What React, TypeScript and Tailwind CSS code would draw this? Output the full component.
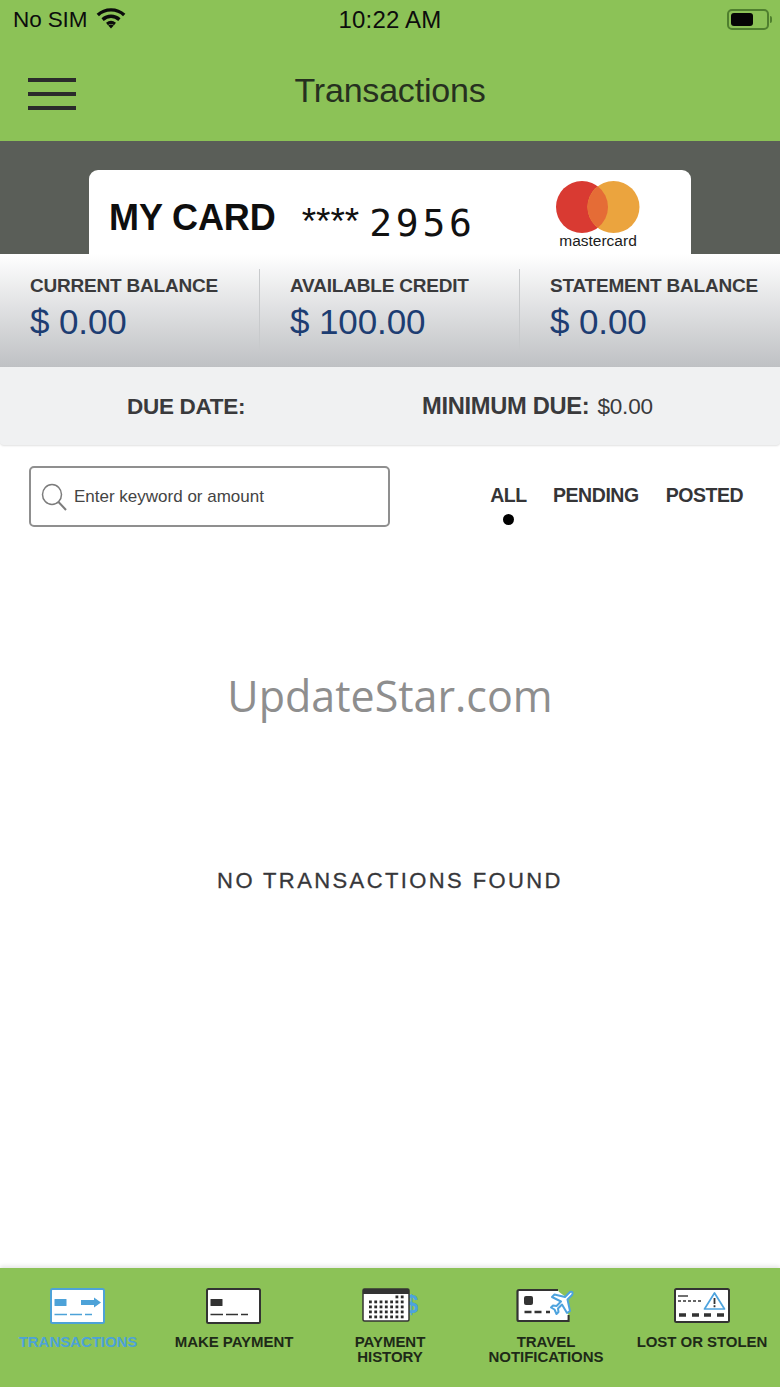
import React from "react";

const sans = "font-['Liberation_Sans',Arial,sans-serif]";

function Wifi() {
  return (
    <svg width="30" height="22" viewBox="0 0 30 22" fill="none" stroke="#0b0b0b" strokeWidth="3.400">
      <path d="M1.800 8 C9 1.200 21 1.200 28.200 8" />
      <path d="M6.600 12.600 C11.600 8.200 18.400 8.200 23.400 12.600" />
      <path d="M11 17 C13.400 15 16.600 15 19 17" strokeWidth="3" />
      <path d="M12.200 18.600 L15 21.600 L17.800 18.600 C16 17.200 14 17.200 12.200 18.600Z" fill="#0b0b0b" stroke="none" />
    </svg>
  );
}

function Battery() {
  return (
    <div className="flex items-center gap-[1px]">
      <div className="w-[42px] h-[21px] rounded-[5px] border-2 border-[#4f7f2e] p-[2px]">
        <div className="w-[22px] h-full rounded-[3px] bg-[#050505]" />
      </div>
      <div className="w-[2px] h-[7px] rounded-r-sm bg-[#4f7f2e]" />
    </div>
  );
}

function MasterLogo() {
  return (
    <div className="flex flex-col items-center w-[84px] shrink-0 mt-[1px]">
      <svg width="84" height="52" viewBox="0 0 84 52" className="block">
        <circle cx="26" cy="26" r="26" fill="#d93a32" />
        <circle cx="57.500" cy="26" r="26" fill="#eba43e" />
        <path d="M41.750 5.300 A26 26 0 0 1 41.750 46.700 A26 26 0 0 1 41.750 5.300Z" fill="#e56c36" />
      </svg>
      <span className={`${sans} text-[15.500px] leading-[16px] text-[#1b1b1b] whitespace-nowrap`}>mastercard</span>
    </div>
  );
}

function Balance({ label, value, last }: { label: string; value: string; last?: boolean }) {
  return (
    <div className={`w-[260px] h-[83px] pl-[30px] pt-[5px] ${last ? "" : "border-r border-[#c8cacc]"}`}>
      <div className="text-[19px] leading-[24px] font-bold text-[#3a3a3c] tracking-[-0.2px] whitespace-nowrap">{label}</div>
      <div className="text-[35px] leading-[40px] mt-[4px] text-[#1d3d72] tracking-[-0.100px] whitespace-nowrap">{value}</div>
    </div>
  );
}

function CardIcon({ color, arrow }: { color: string; arrow?: boolean }) {
  return (
    <svg width="56" height="36" viewBox="0 0 56 36">
      <rect x="1" y="1" width="53" height="34" rx="1.500" fill="#fff" stroke={color} strokeWidth="2" />
      <rect x="4.500" y="11" width="12" height="7" rx="0.500" fill={color} />
      {arrow && <path d="M31 12 H44 V9.500 L51 14.500 L44 19.500 V17 H31Z" fill={color} />}
      <path d="M4.500 26.500 H17 M20 26.500 H32 M35 26.500 H42" stroke={color} strokeWidth="1.500" />
    </svg>
  );
}

function CalendarIcon() {
  const dots: React.ReactElement[] = [];
  for (let c = 0; c < 7; c++) {
    for (let r = 0; r < 5; r++) {
      if (r === 0 && c < 5) continue;
      dots.push(<rect key={`${r}-${c}`} x={7 + c * 5.300} y={7.500 + r * 5} width="2.800" height="2.800" fill="#2c2c2c" />);
    }
  }
  return (
    <svg width="56" height="36" viewBox="0 0 56 36">
      <text x="49.500" y="25" textAnchor="middle" fontFamily="Liberation Sans" fontWeight="700" fontSize="25" fill="#4da3de">$</text>
      <rect x="1" y="1" width="46" height="32" rx="1.500" fill="#fff" stroke="#333" strokeWidth="1.500" />
      <rect x="1" y="1" width="46" height="5" fill="#333" />
      {dots}
    </svg>
  );
}

function TravelIcon() {
  return (
    <svg width="60" height="36" viewBox="0 0 60 36">
      <path d="M42 2 H3 Q1.500 2 1.500 3.500 V31.500 Q1.500 33 3 33 H52.500 V27" fill="#fff" stroke="#333" strokeWidth="2.200" />
      <path d="M30 3.200 H42 L51.300 10 V31.800 H30Z" fill="#fff" />
      <rect x="8" y="8" width="9" height="9" rx="2" fill="#333" />
      <path d="M8.500 24 H15.500 M18.500 24 H25.500 M30 24 H34" stroke="#333" strokeWidth="2.500" />
      <path
        d="M54 4 C56 3 57.500 4.500 56 7 L51.500 11.500 L54 23 L51 25 L46 16.500 L42 20.500 L42.500 24 L40.500 26 L38.500 21.500 L35 19.500 L37 17.500 L40.500 18 L45 13.500 L36 9 L38.500 6.500 L49 9Z"
        fill="#fff"
        stroke="#4da3de"
        strokeWidth="2"
        strokeLinejoin="round"
      />
    </svg>
  );
}

function LostIcon() {
  return (
    <svg width="56" height="36" viewBox="0 0 56 36">
      <rect x="1" y="1" width="54" height="33" rx="1.500" fill="#fff" stroke="#333" strokeWidth="2" />
      <path d="M4 8 H14" stroke="#333" strokeWidth="1.400" />
      <path d="M4 13 H28" stroke="#333" strokeWidth="1.400" strokeDasharray="3 2" />
      <path d="M5 27 H12 M18 27 H25 M30 27 H37 M43 27 H50" stroke="#333" strokeWidth="3.500" />
      <path d="M40.500 5 L50.500 21 H30.500Z" fill="#fff" stroke="#4da3de" strokeWidth="1.700" strokeLinejoin="round" />
      <path d="M40.500 10 V16 M40.500 17.300 V19.300" stroke="#333" strokeWidth="1.800" />
    </svg>
  );
}

function Tab({ icon, lines, active }: { icon: React.ReactNode; lines: string[]; active?: boolean }) {
  return (
    <div className="flex-1 flex flex-col items-center pt-[19px]">
      <div className="h-[38px] flex items-center justify-center">{icon}</div>
      <div className={`mt-[9px] text-center text-[15px] leading-[15px] font-bold whitespace-nowrap tracking-[-0.05px] ${active ? "text-[#4da2d8]" : "text-[#1e2a18]"}`}>
        {lines.map((l) => (
          <div key={l}>{l}</div>
        ))}
      </div>
    </div>
  );
}

export default function App() {
  return (
    <div className={`${sans} w-[780px] h-[1387px] flex flex-col bg-white overflow-hidden`}>
      <header className="h-[141px] shrink-0 bg-[#8cc257] flex flex-col">
        <div className="h-[40px] flex items-center justify-between pl-[13px] pr-[8px] text-[#0d0d0d]">
          <div className="flex items-center gap-[9px] w-[195px]">
            <span className="text-[22.500px] leading-[24px] tracking-[-0.1px]">No SIM</span>
            <div className="-mt-[5px]"><Wifi /></div>
          </div>
          <span className="text-[24px] leading-[24px] tracking-[0.2px]">10:22 AM</span>
          <div className="w-[200px] flex justify-end -mt-[2px]"><Battery /></div>
        </div>
        <div className="relative flex-1 flex items-center justify-center pb-[2px]">
          <div className="absolute left-[28px] top-[38px] w-[48px] flex flex-col gap-[10px]">
            <div className="h-[4px] bg-[#2b2b2b]" />
            <div className="h-[4px] bg-[#2b2b2b]" />
            <div className="h-[4px] bg-[#2b2b2b]" />
          </div>
          <h1 className="text-[34px] leading-[40px] text-[#26301f] tracking-[-0.2px]">Transactions</h1>
        </div>
      </header>

      <section className="h-[113px] shrink-0 bg-[#5a5e58] pt-[29px] flex justify-center">
        <div className="w-[602px] h-[84px] bg-white rounded-t-[9px] flex items-start pl-[20px] pr-[51px] pt-[10px]">
          <span className="text-[36px] leading-[76px] font-bold text-[#0e0e0e] tracking-[-0.100px] whitespace-nowrap">MY CARD</span>
          <span className="text-[37px] leading-[76px] mt-[4px] ml-[26px] text-[#111] whitespace-nowrap">****</span>
          <span className="font-['DejaVu_Sans_Mono',monospace] text-[38px] leading-[76px] mt-[5px] ml-[10px] text-[#111] tracking-[3.700px] whitespace-nowrap">2956</span>
          <div className="ml-auto"><MasterLogo /></div>
        </div>
      </section>

      <section className="h-[113px] shrink-0 flex items-start pt-[15px] bg-gradient-to-b from-white to-[#bfc1c4]">
        <Balance label="CURRENT BALANCE" value="$ 0.00" />
        <Balance label="AVAILABLE CREDIT" value="$ 100.00" />
        <Balance label="STATEMENT BALANCE" value="$ 0.00" last />
      </section>

      <section className="h-[78px] shrink-0 bg-[#f0f1f2] rounded-b-[4px] shadow-[0_1px_2px_rgba(0,0,0,0.12)] flex items-center pt-[2px] text-[#3a3a3c]">
        <span className="ml-[127px] w-[295px] text-[22.500px] font-bold tracking-[-0.3px]">DUE DATE:</span>
        <span className="text-[23.700px] font-bold tracking-[-0.3px]">MINIMUM DUE:</span>
        <span className="ml-[8px] text-[22.500px] tracking-[-0.2px]">$0.00</span>
      </section>

      <section className="h-[823px] shrink-0 flex flex-col">
        <div className="flex items-start pl-[29px] pt-[21px]">
          <div className="w-[361px] h-[61px] rounded-[5px] border-2 border-[#8f8f8f] flex items-center pl-[10px] gap-[7px]">
            <svg width="26" height="28" viewBox="0 0 26 28" fill="none" stroke="#7c7c7c" strokeWidth="1.500">
              <ellipse cx="11" cy="11.500" rx="9.500" ry="10" />
              <path d="M17.500 19 L25 27" strokeWidth="2" />
            </svg>
            <span className="text-[17px] text-[#444] whitespace-nowrap pt-[1px]">Enter keyword or amount</span>
          </div>
          <div className="ml-[101px] flex gap-[27px] text-[19.500px] leading-[24px] font-bold text-[#353537] tracking-[-0.45px] pt-[17px]">
            <div className="w-[35px] flex flex-col items-center">
              <span>ALL</span>
              <span className="mt-[7px] w-[11px] h-[11px] rounded-full bg-black" />
            </div>
            <span>PENDING</span>
            <span>POSTED</span>
          </div>
        </div>
        <div className="mt-[139px] text-center font-['Open_Sans',sans-serif] text-[43px] leading-[60px] text-[#8e8e8e]">UpdateStar.com</div>
        <div className="mt-[140px] text-center text-[22px] leading-[30px] text-[#37373a] tracking-[2.400px] [-webkit-text-stroke:0.3px_#37373a]">NO TRANSACTIONS FOUND</div>
      </section>

      <nav className="flex-1 bg-[#8cc257] shadow-[0_-2px_4px_rgba(0,0,0,0.1)] flex">
        <Tab icon={<CardIcon color="#4da2d8" arrow />} lines={["TRANSACTIONS"]} active />
        <Tab icon={<CardIcon color="#333" />} lines={["MAKE PAYMENT"]} />
        <Tab icon={<CalendarIcon />} lines={["PAYMENT", "HISTORY"]} />
        <Tab icon={<TravelIcon />} lines={["TRAVEL", "NOTIFICATIONS"]} />
        <Tab icon={<LostIcon />} lines={["LOST OR STOLEN"]} />
      </nav>
    </div>
  );
}
